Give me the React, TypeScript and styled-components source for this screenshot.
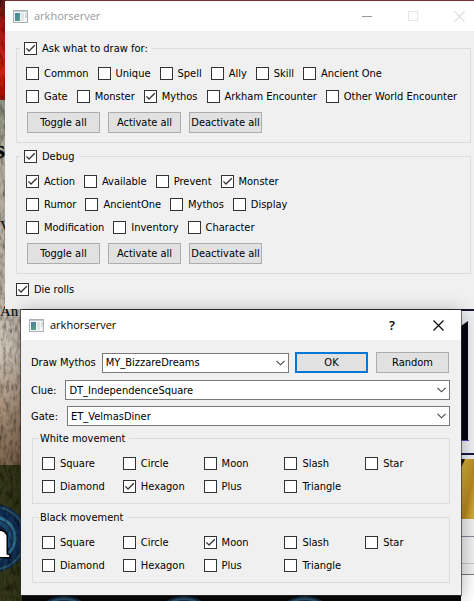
import React, { useId } from "react";
import styled, { createGlobalStyle } from "styled-components";

const Global = createGlobalStyle`
  * { box-sizing: border-box; }
  html, body, #root { height: 100%; margin: 0; }
  body { overflow: hidden; background: #15140e; color: #000; }
  body, button, select, input { font: 11px/13px "DejaVu Sans Condensed", "DejaVu Sans", sans-serif; }
`;

const Desktop = styled.main`
  position: relative;
  min-height: 100vh;
  overflow: hidden;
`;

const WallpaperSvg = styled.svg`
  position: absolute;
  inset: 0;
  width: 100%;
  height: 100%;
`;

const Frame = styled.section<{ $dialog?: boolean }>`
  position: absolute;
  left: ${(p) => (p.$dialog ? "21px" : "5px")};
  right: ${(p) => (p.$dialog ? "13px" : "-8px")};
  top: ${(p) => (p.$dialog ? "310px" : "1px")};
  background: #f0f0f0;
  box-shadow: ${(p) =>
    p.$dialog ? "0 0 0 1px rgba(50, 50, 50, 0.65), 0 3px 18px rgba(0, 0, 0, 0.35)" : "none"};
`;

const TitleBar = styled.header<{ $inactive?: boolean }>`
  display: flex;
  align-items: center;
  height: 30px;
  padding-left: 8px;
  background: #fff;
  color: ${(p) => (p.$inactive ? "#999" : "#000")};
`;

const Title = styled.h1`
  flex: 1;
  margin: 0 0 0 6px;
  font: 11px/16px "Open Sans", sans-serif;
`;

const CaptionButton = styled.button`
  display: grid;
  place-items: center;
  width: 46px;
  height: 30px;
  padding: 0;
  border: 0;
  background: none;
  color: inherit;
  font: 600 13px/16px "Open Sans", sans-serif;
`;

const Body = styled.div`
  display: flex;
  flex-direction: column;
  padding: 11px 11px 13px;
`;

const DialogBody = styled(Body)`
  padding: 12px 11px 12px 10px;
`;

const Group = styled.fieldset`
  min-width: 0;
  margin: 0 0 7px;
  padding: 12px 9px 9px;
  border: 1px solid #dcdcdc;
`;

const MovementGroup = styled(Group)`
  margin: 0 0 0 1px;
  padding: 12px 3px 10px 9px;

  & + & {
    margin-top: 7px;
  }
`;

const CheckLegend = styled.legend`
  margin-left: -6px;
  padding: 0 4px;
`;

const TextLegend = styled.legend`
  height: 13px;
  margin-left: -3px;
  padding: 0 4px 0 1px;
`;

const Check = styled.label`
  display: flex;
  align-items: center;
  gap: 5px;
  height: 13px;
  white-space: nowrap;
`;

const BoxWrap = styled.span`
  display: grid;
  flex: none;
  width: 13px;
  height: 13px;

  & > * {
    grid-area: 1 / 1;
  }
`;

const Box = styled.input`
  appearance: none;
  width: 13px;
  height: 13px;
  margin: 0;
  border: 1px solid #333;
  background: #fff;

  & + svg {
    visibility: hidden;
    pointer-events: none;
  }

  &:checked + svg {
    visibility: visible;
  }
`;

const Rows = styled.div`
  display: flex;
  flex-direction: column;
  gap: 10px;
`;

const Row = styled.div`
  display: flex;
  gap: 9px;
`;

const MovementGrid = styled.div`
  display: grid;
  grid-template-columns: repeat(5, 1fr);
  row-gap: 10px;
`;

const ButtonRow = styled.div`
  display: flex;
  gap: 8px;
  margin-top: 9px;
  padding-left: 1px;
`;

const PushButton = styled.button<{ $primary?: boolean }>`
  flex: none;
  width: 73px;
  height: 21px;
  padding: 0;
  border: ${(p) => (p.$primary ? "2px solid #0078d7" : "1px solid #adadad")};
  background: #e1e1e1;
  color: #000;
  white-space: nowrap;
`;

const FieldRow = styled.div<{ $first?: boolean }>`
  display: flex;
  align-items: center;
  gap: ${(p) => (p.$first ? "6px" : "9px")};
  height: ${(p) => (p.$first ? "21px" : "20px")};
  margin-bottom: ${(p) => (p.$first ? "7px" : "6px")};
  padding-right: ${(p) => (p.$first ? "1px" : "0")};
`;

const Actions = styled.div`
  display: flex;
  gap: 8px;
`;

const Combo = styled.span`
  display: grid;
  flex: 1;
  min-width: 0;
  align-items: center;

  & > * {
    grid-area: 1 / 1;
  }

  & > svg {
    justify-self: end;
    margin-right: 4px;
    pointer-events: none;
  }
`;

const Select = styled.select`
  appearance: none;
  width: 100%;
  height: 20px;
  padding: 0 20px 0 3px;
  border: 1px solid #7a7a7a;
  border-radius: 0;
  background: #fff;
  color: #000;
`;

const DieRolls = styled.div`
  padding-top: 2px;
`;

function Tick({ label, checked }: { label: string; checked?: boolean }) {
  return (
    <Check>
      <BoxWrap>
        <Box type="checkbox" defaultChecked={checked} />
        <svg width="13" height="13" viewBox="0 0 13 13" fill="none" stroke="#333" strokeWidth="1.3">
          <path d="M2.4 6.4 L5 9 L10.8 3.2" />
        </svg>
      </BoxWrap>
      {label}
    </Check>
  );
}

function ComboBox({ id, value }: { id: string; value: string }) {
  return (
    <Combo>
      <Select id={id} defaultValue={value}>
        <option>{value}</option>
      </Select>
      <svg width="9" height="6" viewBox="0 0 9 6" fill="none" stroke="#444" strokeWidth="1.1">
        <path d="M0.5 0.8 L4.5 4.8 L8.5 0.8" />
      </svg>
    </Combo>
  );
}

function AppIcon() {
  const id = useId();
  return (
    <svg width="15" height="13" viewBox="0 0 15 13">
      <defs>
        <linearGradient id={id} x1="0" y1="0" x2="1" y2="1">
          <stop offset="0" stopColor="#4b78a8" />
          <stop offset="1" stopColor="#55a878" />
        </linearGradient>
      </defs>
      <rect x="0.5" y="0.5" width="14" height="12" fill="#f4f6f7" stroke="#a9b1b7" />
      <rect x="1" y="1" width="13" height="1" fill="#c5ccd1" />
      <rect x="2" y="3" width="5" height="8" fill={`url(#${id})`} />
      <rect x="8" y="3" width="3" height="8" fill="#dfe5e8" />
      <rect x="12" y="3" width="2" height="5" fill="#d2dfd8" />
    </svg>
  );
}

function Cross({ color }: { color: string }) {
  return (
    <svg width="11" height="11" viewBox="0 0 11 11" fill="none" stroke={color} strokeWidth="1.1">
      <path d="M0.5 0.5 L10.5 10.5 M10.5 0.5 L0.5 10.5" />
    </svg>
  );
}

function Swirl({ cx, cy, r }: { cx: number; cy: number; r: number }) {
  return (
    <g fill="none">
      <circle cx={cx} cy={cy} r={r} fill="#1a3048" />
      <circle cx={cx} cy={cy} r={r - 3} stroke="#2b5a78" strokeWidth="2" />
      <circle cx={cx} cy={cy} r={r - 8} stroke="#17335c" strokeWidth="4" />
      <circle cx={cx} cy={cy} r={r - 13} stroke="#2f7396" strokeWidth="3" />
      <circle cx={cx} cy={cy} r={r - 18} stroke="#23507a" strokeWidth="4" />
      <circle cx={cx} cy={cy} r={r - 24} fill="#3f8aa3" />
    </g>
  );
}

function Wallpaper() {
  return (
    <WallpaperSvg viewBox="0 0 474 601" preserveAspectRatio="xMinYMin slice" aria-hidden="true">
      <defs>
        <linearGradient id="ember" x1="0" y1="0" x2="0" y2="1">
          <stop offset="0" stopColor="#5d1f1b" />
          <stop offset="0.2" stopColor="#8c1d17" />
          <stop offset="0.5" stopColor="#bd2013" />
          <stop offset="0.85" stopColor="#c9200f" />
          <stop offset="1" stopColor="#8f1b12" />
        </linearGradient>
        <linearGradient id="stone" x1="0" y1="0" x2="0" y2="1">
          <stop offset="0" stopColor="#8a8e7e" />
          <stop offset="0.15" stopColor="#b0ac9d" />
          <stop offset="0.5" stopColor="#b8b0a2" />
          <stop offset="0.68" stopColor="#cfc5b8" />
          <stop offset="0.85" stopColor="#a58c76" />
          <stop offset="1" stopColor="#7a624b" />
        </linearGradient>
        <linearGradient id="gold" x1="0" y1="0" x2="1" y2="1">
          <stop offset="0" stopColor="#dcc044" />
          <stop offset="0.6" stopColor="#b8861f" />
          <stop offset="1" stopColor="#d5b43c" />
        </linearGradient>
        <filter id="grain" x="0" y="0" width="1" height="1">
          <feTurbulence type="fractalNoise" baseFrequency="0.3 0.12" numOctaves="3" seed="4" result="n" />
          <feColorMatrix in="n" values="0 0 0 0 0  0 0 0 0 0  0 0 0 0 0  1.6 0 0 0 -0.65" result="d" />
          <feComposite in="d" in2="SourceGraphic" operator="in" result="g" />
          <feMerge>
            <feMergeNode in="SourceGraphic" />
            <feMergeNode in="g" />
          </feMerge>
        </filter>
      </defs>
      <rect width="474" height="2" fill="#7a3330" />
      <g filter="url(#grain)">
        <rect width="6" height="100" fill="url(#ember)" />
        <rect y="100" width="22" height="367" fill="url(#stone)" />
        <rect y="465" width="22" height="136" fill="#35371b" />
        <Swirl cx={-6} cy={538} r={34} />
      </g>
      <rect x="22" y="595" width="440" height="6" fill="#070807" />
      <Swirl cx={64} cy={629} r={33} />
      <Swirl cx={184} cy={629} r={33} />
      <Swirl cx={305} cy={629} r={33} />
      <rect x="22" y="309" width="452" height="2" fill="#16162c" />
      <rect x="461" y="311" width="13" height="208" fill="#eff0f4" />
      <path d="M461 326 L468 321 V440 H461 Z" fill="#080710" />
      <rect x="461" y="440" width="8" height="1" fill="#5b3aa8" />
      <rect x="461" y="453" width="13" height="2" fill="#16183f" />
      <rect x="461" y="459" width="13" height="60" fill="url(#gold)" />
      <path d="M461 459 H465 L461 468 Z" fill="#18150e" />
      <rect x="461" y="519" width="13" height="82" fill="#f0f0f0" />
      <rect x="461" y="536" width="13" height="1" fill="#82879b" />
      <rect x="461" y="563" width="13" height="1" fill="#c8c8c8" />
      <rect x="461" y="574" width="13" height="1" fill="#777" />
      <rect x="461" y="575" width="13" height="26" fill="#fff" />
      <g fontFamily="Liberation Serif, serif" fill="#050505">
        <text x="-5" y="158" fontSize="26" fontWeight="700">s</text>
        <text x="0" y="231" fontSize="15">V</text>
        <text x="0" y="316" fontSize="15">An</text>
      </g>
      <text
        x="-19"
        y="557"
        fontFamily="Liberation Serif, serif"
        fontSize="58"
        fontWeight="700"
        fill="#fff"
        stroke="#000"
        strokeWidth="3"
        paintOrder="stroke"
      >
        a
      </text>
    </WallpaperSvg>
  );
}

type Item = [label: string, checked?: boolean];

const drawRows: Item[][] = [
  [["Common"], ["Unique"], ["Spell"], ["Ally"], ["Skill"], ["Ancient One"]],
  [["Gate"], ["Monster"], ["Mythos", true], ["Arkham Encounter"], ["Other World Encounter"]],
];

const debugRows: Item[][] = [
  [["Action", true], ["Available"], ["Prevent"], ["Monster", true]],
  [["Rumor"], ["AncientOne"], ["Mythos"], ["Display"]],
  [["Modification"], ["Inventory"], ["Character"]],
];

const shapes = ["Square", "Circle", "Moon", "Slash", "Star", "Diamond", "Hexagon", "Plus", "Triangle"];

function OptionGroup({ title, rows }: { title: string; rows: Item[][] }) {
  return (
    <Group>
      <CheckLegend>
        <Tick label={title} checked />
      </CheckLegend>
      <Rows>
        {rows.map((row) => (
          <Row key={row[0][0]}>
            {row.map(([label, checked]) => (
              <Tick key={label} label={label} checked={checked} />
            ))}
          </Row>
        ))}
      </Rows>
      <ButtonRow>
        <PushButton type="button">Toggle all</PushButton>
        <PushButton type="button">Activate all</PushButton>
        <PushButton type="button">Deactivate all</PushButton>
      </ButtonRow>
    </Group>
  );
}

function Movement({ title, selected }: { title: string; selected: string }) {
  return (
    <MovementGroup>
      <TextLegend>{title}</TextLegend>
      <MovementGrid>
        {shapes.map((shape) => (
          <Tick key={shape} label={shape} checked={shape === selected} />
        ))}
      </MovementGrid>
    </MovementGroup>
  );
}

export default function App() {
  return (
    <Desktop>
      <Global />
      <Wallpaper />
      <Frame>
        <TitleBar $inactive>
          <AppIcon />
          <Title>arkhorserver</Title>
          <CaptionButton aria-label="Minimize">
            <svg width="10" height="1" viewBox="0 0 10 1">
              <rect width="10" height="1" fill="#999" />
            </svg>
          </CaptionButton>
          <CaptionButton aria-label="Maximize">
            <svg width="10" height="10" viewBox="0 0 10 10">
              <rect x="0.5" y="0.5" width="9" height="9" fill="none" stroke="#e6e6e6" />
            </svg>
          </CaptionButton>
          <CaptionButton aria-label="Close">
            <Cross color="#dedede" />
          </CaptionButton>
        </TitleBar>
        <Body>
          <OptionGroup title="Ask what to draw for:" rows={drawRows} />
          <OptionGroup title="Debug" rows={debugRows} />
          <DieRolls>
            <Tick label="Die rolls" checked />
          </DieRolls>
        </Body>
      </Frame>
      <Frame $dialog>
        <TitleBar>
          <AppIcon />
          <Title>arkhorserver</Title>
          <CaptionButton aria-label="Help">?</CaptionButton>
          <CaptionButton aria-label="Close">
            <Cross color="#000" />
          </CaptionButton>
        </TitleBar>
        <DialogBody>
          <FieldRow $first>
            <label htmlFor="mythos">Draw Mythos</label>
            <ComboBox id="mythos" value="MY_BizzareDreams" />
            <Actions>
              <PushButton type="button" $primary>OK</PushButton>
              <PushButton type="button">Random</PushButton>
            </Actions>
          </FieldRow>
          <FieldRow>
            <label htmlFor="clue">Clue:</label>
            <ComboBox id="clue" value="DT_IndependenceSquare" />
          </FieldRow>
          <FieldRow>
            <label htmlFor="gate">Gate:</label>
            <ComboBox id="gate" value="ET_VelmasDiner" />
          </FieldRow>
          <Movement title="White movement" selected="Hexagon" />
          <Movement title="Black movement" selected="Moon" />
        </DialogBody>
      </Frame>
    </Desktop>
  );
}
